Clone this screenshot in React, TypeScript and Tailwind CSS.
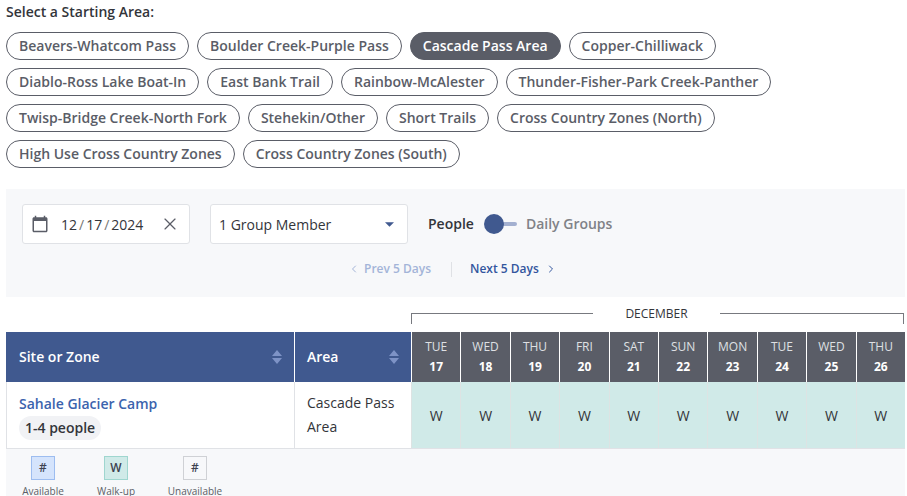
import React from "react";
import { ChevronLeft, ChevronRight, X } from "lucide-react";

const rows = [
  ["Beavers-Whatcom Pass", "Boulder Creek-Purple Pass", "Cascade Pass Area", "Copper-Chilliwack"],
  ["Diablo-Ross Lake Boat-In", "East Bank Trail", "Rainbow-McAlester", "Thunder-Fisher-Park Creek-Panther"],
  ["Twisp-Bridge Creek-North Fork", "Stehekin/Other", "Short Trails", "Cross Country Zones (North)"],
  ["High Use Cross Country Zones", "Cross Country Zones (South)"],
];
const days = [
  ["TUE", "17"], ["WED", "18"], ["THU", "19"], ["FRI", "20"], ["SAT", "21"],
  ["SUN", "22"], ["MON", "23"], ["TUE", "24"], ["WED", "25"], ["THU", "26"],
];

function SortIcon() {
  return (
    <svg width="10" height="14" viewBox="0 0 10 14" className="shrink-0">
      <path d="M5 0 L10 6 L0 6 Z M0 8 L10 8 L5 14 Z" fill="#7e93c6" />
    </svg>
  );
}

function Legend({ label, mark, box, w }: { label: string; mark: string; box: string; w: string }) {
  return (
    <div className={`flex flex-col items-center ${w}`}>
      <div className={`w-6 h-6 border flex items-center justify-center text-[12px] font-semibold text-[#3d4250] ${box}`}>{mark}</div>
      <div className="text-[10px] leading-[14px] mt-[4px] text-[#5b5e66]">{label}</div>
    </div>
  );
}

export default function App() {
  return (
    <div className="w-[907px] h-[496px] overflow-hidden bg-white pl-[6px] pr-[2px] font-['Open_Sans',sans-serif] text-[#25272c]">
      <div className="h-[32px] pt-[2px] text-[14px] leading-[19px] font-semibold text-[#33353a]">Select a Starting Area:</div>
      <div className="flex flex-col gap-2">
        {rows.map((r, i) => (
          <div key={i} className="flex gap-2">
            {r.map((c) => (
              <div
                key={c}
                className={`h-[28px] px-3 pb-px rounded-full border border-[#5a5d67] flex items-center text-[14px] font-semibold ${
                  c === "Cascade Pass Area" ? "bg-[#5a5d67] text-white" : "bg-white text-[#5a5d67]"
                }`}
              >
                {c}
              </div>
            ))}
          </div>
        ))}
      </div>

      <div className="mt-[21px] w-[899px] h-[108px] bg-[#f7f8fa] pl-4 pt-[15px]">
        <div className="flex items-center">
          <div className="w-[168px] h-10 bg-white border border-[#e0e2e6] rounded-[3px] flex items-center pl-2 pr-[9px]">
            <svg width="18" height="18" viewBox="0 0 24 24" fill="#5a5d67" className="shrink-0">
              <path d="M20 3h-1V1h-2v2H7V1H5v2H4c-1.1 0-2 .9-2 2v16c0 1.1.9 2 2 2h16c1.1 0 2-.9 2-2V5c0-1.1-.9-2-2-2zm0 18H4V8h16v13z" />
            </svg>
            <div className="ml-[12px] text-[14px] flex-1 text-[#33353a]">
              12<span className="mx-[2px] text-[#777]">/</span>17<span className="mx-[2px] text-[#777]">/</span>2024
            </div>
            <X size={20} strokeWidth={1.4} className="text-[#5a5d67]" />
          </div>
          <div className="ml-5 w-[198px] h-10 bg-white border border-[#e0e2e6] rounded-[3px] flex items-center pl-2 pr-[13px]">
            <div className="flex-1 text-[14px] text-[#33353a]">1 Group Member</div>
            <svg width="9" height="5" viewBox="0 0 10 5"><path d="M0 0H10L5 5Z" fill="#40598f" /></svg>
          </div>
          <div className="ml-5 pb-px text-[14px] font-semibold text-[#33353a]">People</div>
          <div className="ml-[10px] w-[33px] h-5 flex items-center relative">
            <div className="absolute left-[8px] right-0 h-1 bg-[#a3b0d0] rounded-full" />
            <div className="absolute left-0 w-5 h-5 bg-[#40598f] rounded-full" />
          </div>
          <div className="ml-[9px] pb-px text-[14px] font-semibold text-[#808287]">Daily Groups</div>
        </div>
        <div className="flex items-center mt-[15px] ml-[326px] h-[20px] text-[12px] font-semibold">
          <div className="flex items-center text-[#a3b4d8]">
            <ChevronLeft size={12} strokeWidth={2} />
            <span className="ml-[4px]">Prev 5 Days</span>
          </div>
          <div className="ml-[20px] mr-[18px] w-px h-[15px] bg-[#dfe1e5]" />
          <div className="flex items-center text-[#33569e]">
            <span>Next 5 Days</span>
            <ChevronRight size={12} strokeWidth={2} className="ml-[6px]" />
          </div>
        </div>
      </div>

      <div className="mt-[15px] h-[20px] ml-[405px] w-[493px] flex items-start">
        <div className="w-[182px] h-[11px] mt-[1px] border-t border-l border-[#77797f]" />
        <div className="w-[127px] text-center text-[12px] leading-[3px] text-[#33353a]">DECEMBER</div>
        <div className="w-[184px] h-[11px] mt-[1px] border-t border-r border-[#77797f]" />
      </div>

      <div className="w-[899px] border-b border-[#e0e2e6]">
        <div className="flex h-[50px]">
          <div className="w-[289px] bg-[#40598f] text-white flex items-center pl-[13px] pr-[12px] pb-px border-r border-white">
            <span className="flex-1 text-[14px] font-semibold">Site or Zone</span>
            <SortIcon />
          </div>
          <div className="w-[116px] bg-[#40598f] text-white flex items-center pl-3 pr-3 pb-px">
            <span className="flex-1 text-[14px] font-semibold">Area</span>
            <SortIcon />
          </div>
          <div className="flex-1 grid grid-cols-10">
            {days.map(([d, n], i) => (
              <div key={i} className="bg-[#5a5d67] flex flex-col items-center justify-center text-white border-l border-white">
                <div className="text-[12px] leading-[20px] text-[#dfe0e3]">{d}</div>
                <div className="text-[12px] leading-[20px] font-bold">{n}</div>
              </div>
            ))}
          </div>
        </div>
        <div className="flex h-[66px]">
          <div className="w-[289px] border-l border-r border-[#e0e2e6] pl-[12px] pt-[12px]">
            <div className="text-[14px] leading-[20px] font-semibold text-[#3b63ad]">Sahale Glacier Camp</div>
            <div className="mt-[2px] inline-block h-[24px] px-[6px] rounded-full bg-[#f1f2f5] text-[14px] leading-[24px] font-semibold text-[#33353a]">1-4 people</div>
          </div>
          <div className="w-[116px] pl-3 pt-[9px] text-[14px] leading-[24px] text-[#33353a]">Cascade Pass Area</div>
          <div className="flex-1 grid grid-cols-10">
            {days.map((_, i) => (
              <div key={i} className="bg-[#d0eae8] border-l border-[#dde3e3] flex items-center justify-center text-[14px] text-[#33353a]">W</div>
            ))}
          </div>
        </div>
      </div>

      <div className="w-[899px] h-[60px] bg-[#f7f8fa] flex pt-[7px] pl-[13px]">
        <Legend label="Available" mark="#" box="bg-[#d5e4fc] border-[#9dbdf0]" w="w-[48px] mr-[25px]" />
        <Legend label="Walk-up" mark="W" box="bg-[#d0eae8] border-[#9fd6cf]" w="w-[48px] mr-[27px]" />
        <Legend label="Unavailable" mark="#" box="bg-[#f7f8fa] border-[#cfd1d5]" w="w-[56px]" />
      </div>
    </div>
  );
}
